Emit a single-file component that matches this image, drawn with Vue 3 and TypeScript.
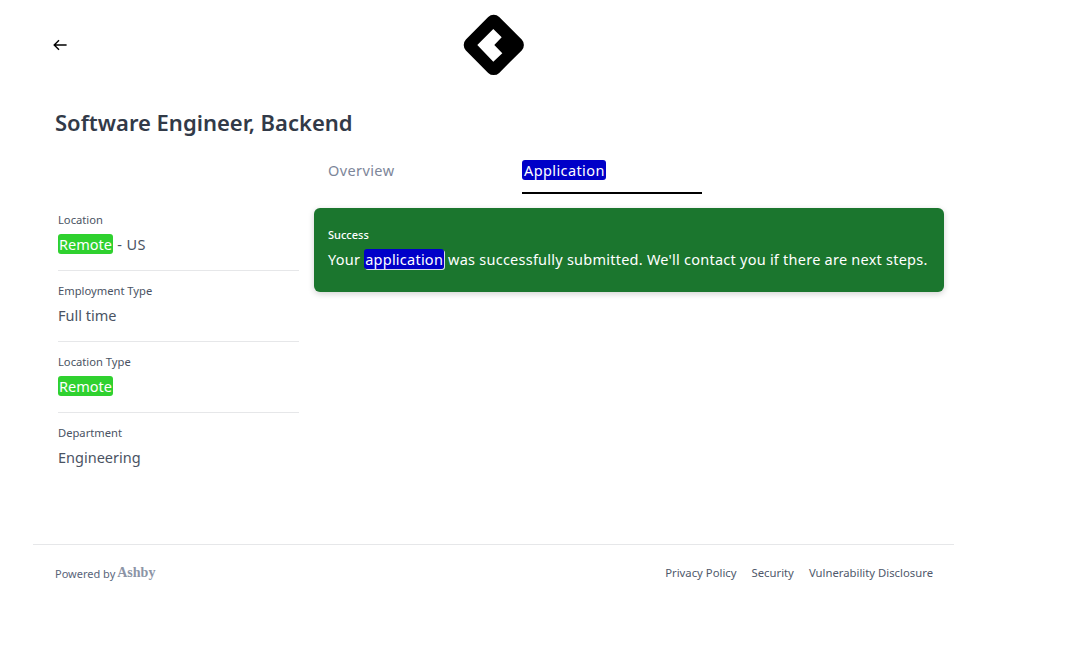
<script setup lang="ts">
interface Field { label: string; value: string; remote: boolean; suffix?: string }
const fields: Field[] = [
  { label: 'Location', value: 'Remote', remote: true, suffix: ' - US' },
  { label: 'Employment Type', value: 'Full time', remote: false },
  { label: 'Location Type', value: 'Remote', remote: true },
  { label: 'Department', value: 'Engineering', remote: false },
]
const links: string[] = ['Privacy Policy', 'Security', 'Vulnerability Disclosure']
</script>

<template>
  <div class="page">
    <header class="header">
      <button class="back" aria-label="Back">
        <svg width="16" height="16" viewBox="0 0 16 16" fill="none" stroke="#000" stroke-width="1.4">
          <path d="M14.6 8H2.5M7 3.2 2.2 8 7 12.8" />
        </svg>
      </button>
      <svg class="logo" width="62" height="62" viewBox="0 0 62 62">
        <path fill-rule="evenodd" d="M25.2 2.9a8 8 0 0 1 11 0L58.7 25.4a8 8 0 0 1 0 11L36.2 58.9a8 8 0 0 1-11 0L2.9 36.4a8 8 0 0 1 0-11ZM30.3 15 14.3 31l16 16.7 9-8.4-8-8.3 7.4-7.7Z" />
      </svg>
    </header>
    <h1 class="title">Software Engineer, Backend</h1>
    <div class="columns">
      <aside class="side">
        <div v-for="f in fields" :key="f.label" class="field">
          <div class="label">{{ f.label }}</div>
          <div class="value"><mark v-if="f.remote" class="hit">{{ f.value }}</mark><template v-else>{{ f.value }}</template><span class="suffix">{{ f.suffix }}</span></div>
        </div>
      </aside>
      <main class="main">
        <nav class="tabs">
          <div class="tab">Overview</div>
          <div class="tab active"><mark class="blue tab-mark">Application</mark></div>
        </nav>
        <div class="alert">
          <div class="alert-title">Success</div>
          <div class="alert-text">Your <mark class="blue outlined">application</mark> was successfully submitted. We'll contact you if there are next steps.</div>
        </div>
      </main>
    </div>
    <footer class="footer">
      <div class="powered"><span class="powered-text">Powered by</span> <span class="brand">Ashby</span></div>
      <div class="links"><span v-for="l in links" :key="l">{{ l }}</span></div>
    </footer>
  </div>
</template>

<style>
html, body { margin: 0; background: #fff; }
</style>

<style scoped>
.page {
  width: 921px;
  margin-left: 33px;
  font-family: "Noto Sans", sans-serif;
  color: #3d4655;
}
.header {
  height: 90px;
  position: relative;
  display: flex;
  align-items: center;
  justify-content: center;
}
.back {
  position: absolute;
  left: 19px;
  top: 37px;
  padding: 0;
  border: 0;
  background: none;
  width: 16px;
  height: 16px;
}
.back svg { display: block; }
.logo { display: block; }
.title {
  margin: 0 0 0 22px;
  padding-top: 16px;
  font-size: 22px;
  line-height: 33px;
  font-weight: 600;
  color: #323a48;
}
.columns {
  display: flex;
  margin-top: 14px;
  height: 391px;
}
.side {
  width: 241px;
  margin-left: 25px;
  padding-top: 47px;
}
.field {
  height: 71px;
  box-sizing: border-box;
  padding-top: 12px;
  border-bottom: 1px solid #e6e7e9;
}
.field:last-child { border-bottom: 0; }
.label {
  font-size: 11.2px;
  line-height: 15px;
  color: #4a5363;
}
.value {
  margin-top: 7px;
  font-size: 14.5px;
  line-height: 21px;
  color: #4a5363;
}
.suffix { letter-spacing: 0.45px; }
.hit {
  background: #2fd12f;
  color: #fff;
  border-radius: 3px;
  padding: 0 1px;
}
.main {
  width: 630px;
  margin-left: 15px;
}
.tabs {
  display: flex;
  gap: 14px;
  padding-left: 14px;
  height: 55px;
}
.tab {
  width: 180px;
  height: 41px;
  box-sizing: border-box;
  padding-top: 7px;
  font-size: 14.5px;
  line-height: 21px;
  letter-spacing: 0.4px;
  color: #7d8699;
}
.tab.active { border-bottom: 2px solid #000; }
.blue {
  background: #0000c8;
  color: #fff;
  border-radius: 3px;
  padding: 0 1px;
}
.tab-mark { padding: 0 1px 0 2px; }
.outlined { box-shadow: 1px 1px 0 #d8dde8; }
.alert {
  height: 84px;
  box-sizing: border-box;
  padding: 19px 14px 0;
  background: #1b762e;
  border-radius: 6px;
  box-shadow: 0 2px 6px rgba(0, 0, 0, 0.18);
  color: #fff;
}
.alert-title {
  font-size: 11px;
  line-height: 16px;
  font-weight: 500;
}
.alert-text {
  margin-top: 6px;
  font-size: 14.5px;
  line-height: 21px;
  letter-spacing: 0.24px;
  white-space: nowrap;
}
.footer {
  height: 56px;
  border-top: 1px solid #e6e7e9;
  display: flex;
  align-items: center;
  justify-content: space-between;
  padding: 0 21px 0 22px;
}
.powered {
  font-size: 11px;
  color: #59647a;
  display: flex;
  align-items: center;
  gap: 2px;
}
.brand {
  font-family: "Liberation Serif", serif;
  font-weight: 700;
  font-size: 14px;
  color: #8c94a6;
}
.links {
  display: flex;
  gap: 15px;
  font-size: 11.3px;
  line-height: 16px;
  padding-bottom: 1px;
  color: #4f596b;
}
</style>
